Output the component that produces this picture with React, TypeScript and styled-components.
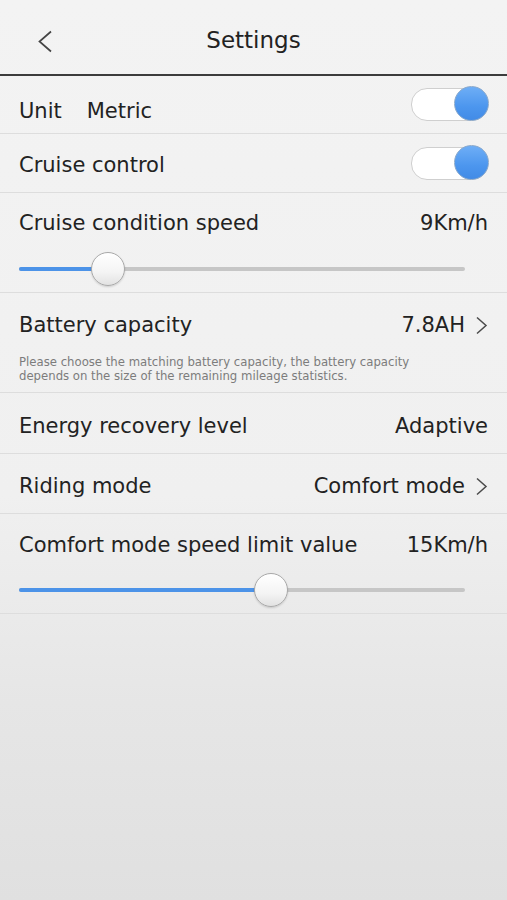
import styled, { createGlobalStyle } from "styled-components";

const GlobalStyle = createGlobalStyle`
  html, body {
    margin: 0;
    padding: 0;
  }
  body {
    font-family: "DejaVu Sans", "Liberation Sans", Arial, sans-serif;
    color: #222;
    background: linear-gradient(180deg, #f3f3f3 0%, #f0f0f0 55%, #e6e6e6 78%, #e0e0e0 100%);
    min-height: 900px;
  }
`;

const Page = styled.div`
  width: 507px;
  min-height: 900px;
`;

const Header = styled.div`
  height: 74px;
  display: flex;
  align-items: center;
  justify-content: center;
  position: relative;
  border-bottom: 2px solid #3c3c3c;
`;

const Title = styled.div`
  font-size: 23px;
  color: #222;
  margin-top: 6px;
`;

const BackButton = styled.div`
  position: absolute;
  left: 37px;
  top: 30px;
  display: flex;
`;

const Row = styled.div<{ $h: number }>`
  height: ${({ $h }) => $h}px;
  border-bottom: 1px solid #dddddd;
  padding: 0 19px;
  display: flex;
  align-items: center;
  justify-content: space-between;
  box-sizing: border-box;
`;

const Block = styled.div<{ $h: number }>`
  height: ${({ $h }) => $h}px;
  border-bottom: 1px solid #dddddd;
  padding: 0 19px;
  display: flex;
  flex-direction: column;
  box-sizing: border-box;
`;

const Line = styled.div<{ $pt: number }>`
  display: flex;
  align-items: center;
  justify-content: space-between;
  padding-top: ${({ $pt }) => $pt}px;
  height: 24px;
`;

const Label = styled.span<{ $dy?: number }>`
  font-size: 21px;
  color: #222;
  display: flex;
  gap: 25px;
  margin-top: ${({ $dy = 0 }) => $dy}px;
`;

const Value = styled.span<{ $dy?: number }>`
  font-size: 21px;
  color: #222;
  display: flex;
  align-items: center;
  gap: 10px;
  margin-top: ${({ $dy = 0 }) => $dy}px;
`;

const Hint = styled.div`
  font-size: 11.7px;
  line-height: 14px;
  color: #7c7c7c;
  margin-top: 18px;
`;

const Toggle = styled.div`
  width: 75px;
  height: 31px;
  border-radius: 16px;
  border: 1px solid #cfcfcf;
  background: #fff;
  position: relative;
`;

const ToggleKnob = styled.div`
  position: absolute;
  right: -2px;
  top: -3px;
  width: 35px;
  height: 35px;
  border-radius: 50%;
  box-sizing: border-box;
  border: 1px solid #8aa9cc;
  background: linear-gradient(180deg, #6eaef6 0%, #4c96ee 60%, #428be6 100%);
`;

const SliderWrap = styled.div<{ $mt: number }>`
  margin-top: ${({ $mt }) => $mt}px;
  width: 446px;
  height: 34px;
  position: relative;
  display: flex;
  align-items: center;
`;

const Track = styled.div`
  flex: 1;
  height: 4px;
  border-radius: 2px;
  background: #c6c6c6;
  display: flex;
`;

const Fill = styled.div`
  height: 4px;
  border-radius: 2px;
  background: #4c93e8;
`;

const Thumb = styled.div`
  position: absolute;
  top: 0;
  width: 34px;
  height: 34px;
  border-radius: 50%;
  box-sizing: border-box;
  border: 1.5px solid #a9a9a9;
  background: linear-gradient(180deg, #ffffff 0%, #f4f4f4 60%, #e2e2e2 100%);
  box-shadow: 0 1px 2px rgba(0, 0, 0, 0.15);
  transform: translateX(-17px);
`;

const Chevron = () => (
  <svg width="13" height="19" viewBox="0 0 13 19" fill="none">
    <path d="M2 1.5 L11 9.5 L2 17.5" stroke="#4a4a4a" strokeWidth="1.5" />
  </svg>
);

const Slider = ({ pos, mt }: { pos: number; mt: number }) => (
  <SliderWrap $mt={mt}>
    <Track>
      <Fill style={{ width: pos }} />
    </Track>
    <Thumb style={{ left: pos }} />
  </SliderWrap>
);

export default function App() {
  return (
    <Page>
      <GlobalStyle />
      <Header>
        <BackButton>
          <svg width="16" height="23" viewBox="0 0 16 23" fill="none">
            <path d="M14 1.5 L2.5 11.5 L14 21.5" stroke="#444" strokeWidth="1.7" />
          </svg>
        </BackButton>
        <Title>Settings</Title>
      </Header>

      <Row $h={58}>
        <Label $dy={12}>
          <span>Unit</span>
          <span>Metric</span>
        </Label>
        <Toggle>
          <ToggleKnob />
        </Toggle>
      </Row>

      <Row $h={59}>
        <Label $dy={4}>Cruise control</Label>
        <Toggle>
          <ToggleKnob />
        </Toggle>
      </Row>

      <Block $h={100}>
        <Line $pt={18}>
          <Label>Cruise condition speed</Label>
          <Value>9Km/h</Value>
        </Line>
        <Slider pos={89} mt={17} />
      </Block>

      <Block $h={100}>
        <Line $pt={20}>
          <Label>Battery capacity</Label>
          <Value>
            7.8AH <Chevron />
          </Value>
        </Line>
        <Hint>
          Please choose the matching battery capacity, the battery capacity
          <br />
          depends on the size of the remaining mileage statistics.
        </Hint>
      </Block>

      <Row $h={61}>
        <Label $dy={6}>Energy recovery level</Label>
        <Value $dy={6}>Adaptive</Value>
      </Row>

      <Row $h={60}>
        <Label $dy={5}>Riding mode</Label>
        <Value $dy={5}>
          Comfort mode <Chevron />
        </Value>
      </Row>

      <Block $h={100}>
        <Line $pt={19}>
          <Label>Comfort mode speed limit value</Label>
          <Value>15Km/h</Value>
        </Line>
        <Slider pos={252} mt={16} />
      </Block>
    </Page>
  );
}
